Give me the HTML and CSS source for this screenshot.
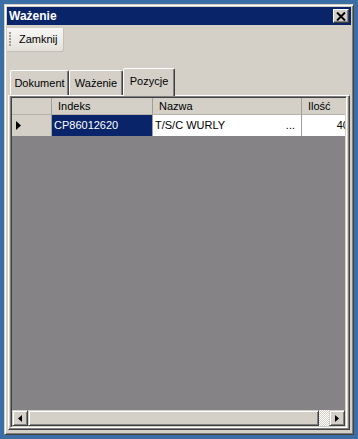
FILE: index.html
```html
<!DOCTYPE html>
<html lang="pl">
<head>
    <meta charset="UTF-8">
    <meta name="viewport" content="width=device-width, initial-scale=1.0">
    <title>Ważenie</title>
    <link rel="stylesheet" href="styles.css">
</head>
<body>
    <div class="window">
        <div class="titlebar">
            <span class="title">Ważenie</span>
            <span class="close-btn">
                <svg width="10" height="9" viewBox="0 0 10 9">
                    <path d="M1 0.5 L9 8.5 M9 0.5 L1 8.5" stroke="#000" stroke-width="2" fill="none"/>
                </svg>
            </span>
        </div>

        <div class="toolbar">
            <div class="toolstrip">
                <span class="grip"></span>
                <span class="tool-btn">Zamknij</span>
            </div>
        </div>

        <div class="tabcontrol">
            <div class="tab-strip">
                <div class="tab tab-dokument">Dokument</div>
                <div class="tab tab-wazenie">Ważenie</div>
                <div class="tab tab-pozycje active">Pozycje</div>
            </div>

            <div class="tab-panel">
                <!-- Pozycje grid -->
                <div class="grid">
                    <div class="grid-rows">
                        <div class="grid-row header">
                            <div class="cell row-head"></div>
                            <div class="cell">Indeks</div>
                            <div class="cell">Nazwa</div>
                            <div class="cell">Ilość</div>
                        </div>
                        <div class="grid-row data">
                            <div class="cell row-head">
                                <svg width="5" height="9" viewBox="0 0 5 9">
                                    <polygon points="0,0 5,4.5 0,9" fill="#000"/>
                                </svg>
                            </div>
                            <div class="cell selected">CP86012620</div>
                            <div class="cell name"><span>T/S/C WURLY</span><span>...</span></div>
                            <div class="cell num">40</div>
                        </div>
                    </div>

                    <div class="hscroll">
                        <span class="scroll-btn">
                            <svg width="4" height="7" viewBox="0 0 4 7">
                                <polygon points="4,0 0,3.5 4,7" fill="#000"/>
                            </svg>
                        </span>
                        <span class="scroll-thumb"></span>
                        <span class="scroll-track"></span>
                        <span class="scroll-btn">
                            <svg width="4" height="7" viewBox="0 0 4 7">
                                <polygon points="0,0 4,3.5 0,7" fill="#000"/>
                            </svg>
                        </span>
                    </div>
                </div>
            </div>
        </div>
    </div>
</body>
</html>
```

FILE: styles.css
```css
* {
    box-sizing: border-box;
}

body {
    margin: 0;
    padding: 4px;
    width: 358px;
    height: 439px;
    background: #3a6ea5;
    font-family: "Liberation Sans", Arial, sans-serif;
    font-size: 11px;
    color: #000;
    overflow: hidden;
}

/* Window frame */
.window {
    width: 350px;
    height: 431px;
    display: flex;
    flex-direction: column;
    background: #d4d0c8;
    border: 1px solid;
    border-color: #d4d0c8 #404040 #404040 #d4d0c8;
    box-shadow: inset 1px 1px #fff, inset -1px -1px #808080;
    padding: 2px;
}

.titlebar {
    height: 18px;
    display: flex;
    align-items: center;
    justify-content: space-between;
    background: #0a246a;
    padding: 0 2px;
}

.title {
    color: #fff;
    font-weight: bold;
    font-size: 12px;
}

.close-btn {
    width: 16px;
    height: 14px;
    display: flex;
    align-items: center;
    justify-content: center;
    background: #d4d0c8;
    border: 1px solid;
    border-color: #fff #404040 #404040 #fff;
    box-shadow: inset -1px -1px #808080;
}

/* Toolbar */
.toolbar {
    padding-top: 3px;
    height: 43px;
}

.toolstrip {
    width: 57px;
    height: 24px;
    display: flex;
    align-items: center;
    background: linear-gradient(#f8f7f5, #e4e1da);
    border-right: 1px solid #c4c0b8;
    border-bottom: 1px solid #c4c0b8;
    border-radius: 0 0 3px 0;
}

.grip {
    width: 2px;
    height: 15px;
    margin-left: 2px;
    background: repeating-linear-gradient(to bottom, #a09c94 0 2px, transparent 2px 3px);
}

.tool-btn {
    margin-left: 8px;
    line-height: 13px;
}

/* Tabs */
.tabcontrol {
    flex: 1;
    display: flex;
    flex-direction: column;
    margin: 0 0 2px 1px;
    width: 342px;
}

.tab-strip {
    height: 27px;
    display: flex;
    align-items: flex-end;
    padding-left: 2px;
}

.tab {
    height: 25px;
    padding-top: 6px;
    text-align: center;
    line-height: 13px;
    border-top: 1px solid #fff;
    border-left: 1px solid #fff;
    border-right: 1px solid #404040;
    box-shadow: inset -1px 0 #808080;
    border-radius: 2px 2px 0 0;
}

.tab-dokument {
    width: 59px;
}

.tab-wazenie {
    width: 54px;
}

.tab-pozycje {
    width: 52px;
}

.tab.active {
    height: 28px;
    margin-bottom: -1px;
    background: #d4d0c8;
    position: relative;
    z-index: 1;
}

.tab-panel {
    flex: 1;
    display: flex;
    border: 1px solid;
    border-color: #fff #404040 #404040 #fff;
    box-shadow: inset -1px -1px #808080;
    padding: 0 2px 1px 1px;
}

/* Grid */
.grid {
    flex: 1;
    display: flex;
    flex-direction: column;
    overflow: hidden;
    background: #868387;
    border: 1px solid;
    border-color: #808080 #fff #fff #808080;
    box-shadow: inset 1px 1px #404040, inset -1px -1px #d4d0c8;
    padding: 1px;
}

.grid-rows {
    flex: 1;
    overflow: hidden;
}

.grid-row {
    display: grid;
    grid-template-columns: 40px 101px 149px 52px;
}

.cell {
    display: flex;
    align-items: center;
    line-height: 13px;
    white-space: nowrap;
    border-right: 1px solid #a09d97;
}

.header .cell {
    height: 17px;
    padding-left: 6px;
    background: #d4d0c8;
    border-bottom: 1px solid #b6b2aa;
}

.data .cell {
    height: 21px;
    padding: 0 4px 0 2px;
    background: #fff;
}

.data .row-head {
    background: #d4d0c8;
    padding-left: 4px;
}

.data .selected {
    background: #0a246a;
    color: #fff;
}

.data .name {
    justify-content: space-between;
    padding-right: 6px;
}

.data .num {
    justify-content: flex-end;
    padding-right: 4px;
}

/* Horizontal scrollbar */
.hscroll {
    height: 16px;
    display: flex;
}

.scroll-btn,
.scroll-thumb {
    height: 16px;
    background: #d4d0c8;
    border: 1px solid;
    border-color: #d4d0c8 #404040 #404040 #d4d0c8;
    box-shadow: inset 1px 1px #fff, inset -1px -1px #808080;
}

.scroll-btn {
    width: 16px;
    display: flex;
    align-items: center;
    justify-content: center;
}

.scroll-thumb {
    flex: 1;
}

.scroll-track {
    width: 10px;
    background: repeating-conic-gradient(#fff 0 25%, #d4d0c8 0 50%) 0 0 / 2px 2px;
}
```
